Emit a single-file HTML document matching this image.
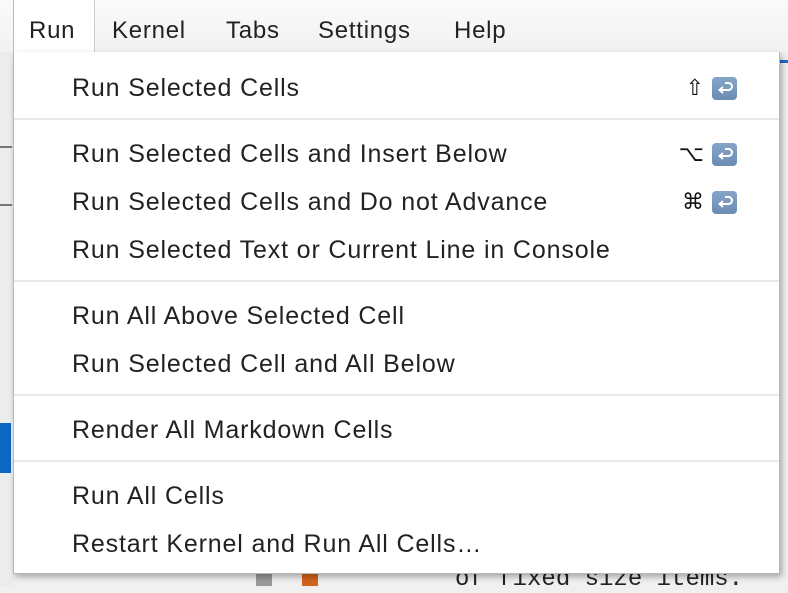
<!DOCTYPE html>
<html><head><meta charset="utf-8"><style>
html,body{margin:0;padding:0;width:788px;height:586px;overflow:hidden;background:#f0f0f0;font-family:"Liberation Sans",sans-serif;}
.bar{position:absolute;left:0;top:0;width:788px;height:52px;background:linear-gradient(#fafafa,#f2f2f2);}
.mi{position:absolute;top:17px;font-size:24px;letter-spacing:0.75px;color:#222;}
.runtab{position:absolute;left:13px;top:0;width:80px;height:53px;background:#fff;border-left:1px solid #bbb;border-right:1px solid #ccc;}
.left{position:absolute;left:0;top:52px;width:13px;height:534px;background:#ececec;}
.menu{position:absolute;left:13px;top:52px;width:765px;height:521px;background:#fff;border:1px solid #b8b8b8;border-top:none;box-shadow:2px 3px 6px rgba(0,0,0,.3);}
.it{position:absolute;left:58px;font-size:25px;letter-spacing:0.85px;color:#222;line-height:30px;}
.sep{position:absolute;left:0;width:765px;height:2px;background:#e8e8e8;}
.sc{position:absolute;right:42px;display:flex;align-items:center;gap:8px;font-size:22px;color:#111;}
.rk{width:25px;height:23px;border-radius:4px;background:linear-gradient(#86a6c8,#6b8cb3);display:flex;align-items:center;justify-content:center;}
</style></head><body>
<div class="bar"></div>
<div class="left"></div>
<div style="position:absolute;left:0;top:146px;width:12px;height:2px;background:#777"></div>
<div style="position:absolute;left:0;top:204px;width:12px;height:2px;background:#777"></div>
<div style="position:absolute;left:0;top:423px;width:11px;height:50px;background:#0a67c2"></div>
<div style="position:absolute;left:256px;top:574px;width:16px;height:12px;background:#999"></div>
<div style="position:absolute;left:302px;top:574px;width:16px;height:12px;background:#d3631b"></div>
<div style="position:absolute;left:455px;top:566px;font-family:'Liberation Mono',monospace;font-size:24px;color:#222">of fixed size items.</div>
<div style="position:absolute;left:780px;top:60px;width:8px;height:3px;background:#1d6cc7"></div>
<div class="runtab"></div>
<div class="mi" style="left:29px">Run</div>
<div class="mi" style="left:112px">Kernel</div>
<div class="mi" style="left:226px">Tabs</div>
<div class="mi" style="left:318px">Settings</div>
<div class="mi" style="left:454px">Help</div>
<div class="menu">
<div class="it" style="top:21px">Run Selected Cells</div>
<div class="sc" style="top:23px">⇧<div class="rk"><svg width="17" height="15" viewBox="0 0 17 15"><path d="M9 2h3.5a3.5 3.5 0 0 1 0 7H4M7 6L3.5 9 7 12" fill="none" stroke="#fff" stroke-width="2"/></svg></div></div>
<div class="sep" style="top:66px"></div>
<div class="it" style="top:87px">Run Selected Cells and Insert Below</div>
<div class="sc" style="top:89px">⌥<div class="rk"><svg width="17" height="15" viewBox="0 0 17 15"><path d="M9 2h3.5a3.5 3.5 0 0 1 0 7H4M7 6L3.5 9 7 12" fill="none" stroke="#fff" stroke-width="2"/></svg></div></div>
<div class="it" style="top:135px">Run Selected Cells and Do not Advance</div>
<div class="sc" style="top:137px">⌘<div class="rk"><svg width="17" height="15" viewBox="0 0 17 15"><path d="M9 2h3.5a3.5 3.5 0 0 1 0 7H4M7 6L3.5 9 7 12" fill="none" stroke="#fff" stroke-width="2"/></svg></div></div>
<div class="it" style="top:183px">Run Selected Text or Current Line in Console</div>
<div class="sep" style="top:228px"></div>
<div class="it" style="top:249px">Run All Above Selected Cell</div>
<div class="it" style="top:297px">Run Selected Cell and All Below</div>
<div class="sep" style="top:342px"></div>
<div class="it" style="top:363px">Render All Markdown Cells</div>
<div class="sep" style="top:408px"></div>
<div class="it" style="top:429px">Run All Cells</div>
<div class="it" style="top:477px">Restart Kernel and Run All Cells…</div>
</div>
</body></html>
